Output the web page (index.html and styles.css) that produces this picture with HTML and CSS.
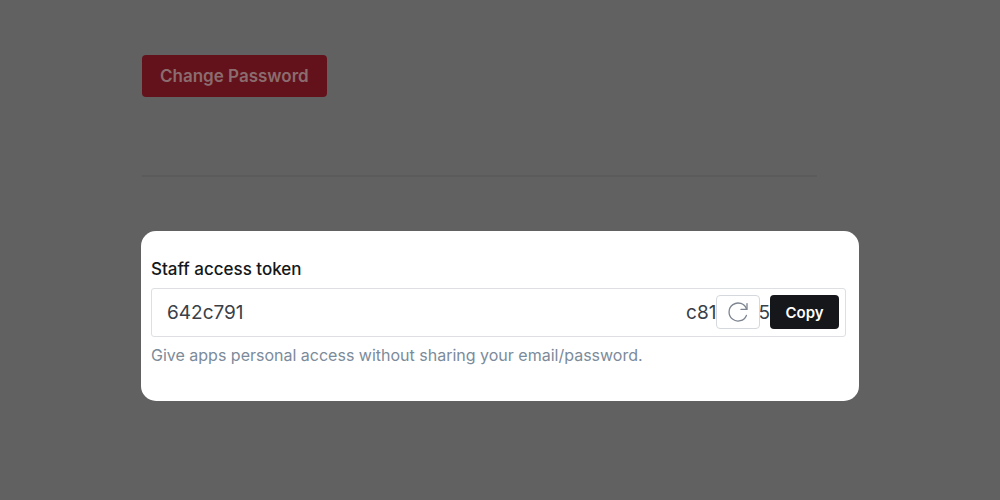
FILE: index.html
```html
<!DOCTYPE html>
<html lang="en">
<head>
    <meta charset="UTF-8">
    <meta name="viewport" content="width=device-width, initial-scale=1.0">
    <title>Staff access token</title>
    <link rel="stylesheet" href="styles.css">
</head>
<body>

    <main class="settings">
        <button type="button" class="changePassword">Change Password</button>
        <hr class="divider">

        <section class="tokenCard">
            <label class="tokenLabel" for="token">Staff access token</label>
            <div class="tokenField">
                <input class="token" type="text" id="token" value="642c791" aria-describedby="tokenHelp" readonly>
                <span class="tokenPart">c81</span>
                <button type="button" class="refresh" aria-label="Regenerate">
                    <svg width="22" height="22" viewBox="0 0 22 22" fill="none" stroke="currentColor" stroke-width="1.3" stroke-linecap="round" stroke-linejoin="round">
                        <path d="M19.4 14.4A9 9 0 1 1 19.6 8.2"/>
                        <path d="M20 2.6V8.4H14"/>
                    </svg>
                </button>
                <span class="tokenPart">5</span>
                <button type="button" class="copy">Copy</button>
            </div>
            <p class="tokenHelp" id="tokenHelp">Give apps personal access without sharing your email/password.</p>
        </section>
    </main>

</body>
</html>
```
FILE: styles.css
```css
* {
    box-sizing: border-box;
}
body {
    margin: 0;
    background-color: #616161;
    font-family: Inter, "Liberation Sans", sans-serif;
}
button, input {
    font-family: inherit;
}
.settings {
    padding: 55px 141px 0;
}
.changePassword {
    display: block;
    height: 42px;
    margin-left: 1px;
    padding: 0 18px;
    border: none;
    border-radius: 4px;
    background-color: #63121b;
    color: #8b6c6f;
    font-size: 17px;
    font-weight: 600;
}
.divider {
    height: 2px;
    margin: 78px 42px 54px 1px;
    border: none;
    background-color: #5b5b5b;
}
.tokenCard {
    padding: 26px 13px 34px 10px;
    border-radius: 15px;
    background-color: white;
}
.tokenLabel {
    display: block;
    margin-bottom: 7px;
    color: #15171a;
    font-size: 17px;
    font-weight: 500;
    line-height: 24px;
}
.tokenField {
    display: flex;
    align-items: center;
    height: 49px;
    padding: 0 6px 1px 0;
    border: 1px solid #dddfe2;
    border-radius: 3px;
    color: #394047;
    font-size: 19px;
}
.token {
    flex: 1;
    min-width: 0;
    height: 100%;
    padding: 0 15px;
    border: none;
    outline: none;
    background: none;
    color: inherit;
    font-size: 19px;
}
/* sits slightly over the end of the token */
.refresh {
    position: relative;
    display: flex;
    justify-content: center;
    align-items: center;
    width: 44px;
    height: 34px;
    margin-right: -2px;
    padding: 0;
    border: 1px solid #d5d8dc;
    border-radius: 4px;
    background-color: white;
    color: #7c8490;
}
.copy {
    width: 69px;
    height: 34px;
    padding: 0;
    border: none;
    border-radius: 4px;
    background-color: #15171a;
    color: white;
    font-size: 15px;
    font-weight: 600;
}
.tokenHelp {
    margin: 6px 0 0;
    color: #7c8b9a;
    font-size: 16px;
    line-height: 24px;
}
```
